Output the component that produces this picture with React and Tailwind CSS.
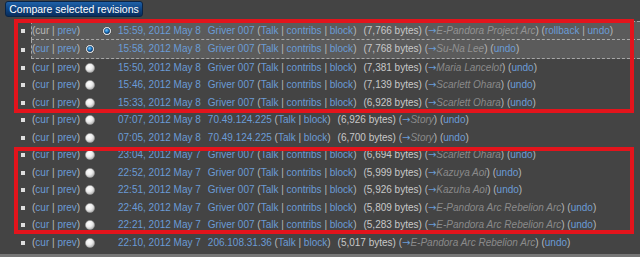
import React from "react";

const rows = [
  { hl: "first", cur: false, r1: null, r2: "on", date: "15:59, 2012 May 8", user: "Griver 007", contribs: true, bytes: "7,766", sum: "E-Pandora Project Arc", rollback: true },
  { hl: "second", cur: true, r1: "on", r2: null, date: "15:58, 2012 May 8", user: "Griver 007", contribs: true, bytes: "7,768", sum: "Su-Na Lee" },
  { cur: true, r1: "off", date: "15:50, 2012 May 8", user: "Griver 007", contribs: true, bytes: "7,381", sum: "Maria Lancelot" },
  { cur: true, r1: "off", date: "15:46, 2012 May 8", user: "Griver 007", contribs: true, bytes: "7,139", sum: "Scarlett Ohara" },
  { cur: true, r1: "off", date: "15:33, 2012 May 8", user: "Griver 007", contribs: true, bytes: "6,928", sum: "Scarlett Ohara" },
  { cur: true, r1: "off", date: "07:07, 2012 May 8", user: "70.49.124.225", contribs: false, bytes: "6,926", sum: "Story" },
  { cur: true, r1: "off", date: "07:05, 2012 May 8", user: "70.49.124.225", contribs: false, bytes: "6,700", sum: "Story" },
  { cur: true, r1: "off", date: "23:04, 2012 May 7", user: "Griver 007", contribs: true, bytes: "6,694", sum: "Scarlett Ohara" },
  { cur: true, r1: "off", date: "22:52, 2012 May 7", user: "Griver 007", contribs: true, bytes: "5,999", sum: "Kazuya Aoi" },
  { cur: true, r1: "off", date: "22:51, 2012 May 7", user: "Griver 007", contribs: true, bytes: "5,926", sum: "Kazuha Aoi" },
  { cur: true, r1: "off", date: "22:46, 2012 May 7", user: "Griver 007", contribs: true, bytes: "5,809", sum: "E-Pandora Arc Rebelion Arc" },
  { cur: true, r1: "off", date: "22:21, 2012 May 7", user: "Griver 007", contribs: true, bytes: "5,283", sum: "E-Pandora Arc Rebelion Arc" },
  { cur: true, r1: "off", date: "22:10, 2012 May 7", user: "206.108.31.36", contribs: false, bytes: "5,017", sum: "E-Pandora Arc Rebelion Arc" },
];

const L = ({ children }) => <span className="text-[#6a9bd6]">{children}</span>;
const G = ({ children }) => <span className="text-[#b8b8b8]">{children}</span>;

function Radio({ state }) {
  if (!state) return null;
  if (state === "on") {
    return (
      <svg width="10" height="10" viewBox="0 0 10 10">
        <defs>
          <radialGradient id="rb" cx="40%" cy="35%" r="60%">
            <stop offset="0%" stopColor="#7cc4f4" />
            <stop offset="60%" stopColor="#1d7fcf" />
            <stop offset="100%" stopColor="#0c3f78" />
          </radialGradient>
        </defs>
        <circle cx="5" cy="5" r="4.5" fill="#e6e6e6" stroke="#3a3a3a" strokeWidth="0.8" />
        <circle cx="5" cy="5" r="2.7" fill="url(#rb)" stroke="#0b3560" strokeWidth="0.5" />
      </svg>
    );
  }
  return (
    <svg width="10" height="10" viewBox="0 0 10 10">
      <defs>
        <radialGradient id="rw" cx="40%" cy="35%" r="65%">
          <stop offset="0%" stopColor="#ffffff" />
          <stop offset="55%" stopColor="#ececec" />
          <stop offset="100%" stopColor="#b4b4b4" />
        </radialGradient>
      </defs>
      <circle cx="5" cy="5" r="4.6" fill="url(#rw)" stroke="#9a9a9a" strokeWidth="0.5" />
    </svg>
  );
}

function Row({ r }) {
  const hlCls =
    r.hl === "first"
      ? "bg-[#5b5b5b] border-l border-t border-b border-dashed border-[#a8a8a8] h-[19px]"
      : r.hl === "second"
      ? "bg-[#5b5b5b] border-l border-b border-dashed border-[#a8a8a8] h-[19px]"
      : "border-l border-transparent h-[17.5px]";
  const sumColor = r.hl ? "text-[#929292]" : "text-[#8a8a8a]";
  return (
    <div className="flex items-center">
      <div className="w-[31px] flex justify-end pr-[6px]">
        <span className="block w-[4px] h-[4px] bg-[#dedede]" />
      </div>
      <div className={`flex-1 flex items-center whitespace-nowrap ${hlCls}`}>
        <span className="w-[53px] shrink-0">
          <G>(</G>
          {r.cur ? <L>cur</L> : <G>cur</G>}
          <G> | </G>
          <L>prev</L>
          <G>)</G>
        </span>
        <span className="w-[10px] h-[10px] flex items-center justify-center shrink-0">
          <Radio state={r.r1} />
        </span>
        <span className="w-[7px] shrink-0" />
        <span className="w-[10px] h-[10px] flex items-center justify-center shrink-0">
          <Radio state={r.r2} />
        </span>
        <span className="w-[6px] shrink-0" />
        <L>{r.date}</L>
        <span className="w-[7px] shrink-0" />
        <L>{r.user}</L>
        <span>
          <G>&nbsp;(</G>
          <L>Talk</L>
          {r.contribs && (
            <>
              <G> | </G>
              <L>contribs</L>
            </>
          )}
          <G> | </G>
          <L>block</L>
          <G>)</G>
        </span>
        <span className="w-[7px] shrink-0" />
        <span className="text-[#c8c8c8]">({r.bytes} bytes)</span>
        <span className="flex items-center">
          <G>&nbsp;(</G>
          <span
            className="text-[#6a9bd6] text-[10px]"
            style={{ fontFamily: '"DejaVu Sans", sans-serif' }}
          >
            →
          </span>
          <span className={`italic ${sumColor}`}>{r.sum}</span>
          <G>)</G>
        </span>
        <span>
          <G>&nbsp;(</G>
          {r.rollback && (
            <>
              <L>rollback</L>
              <G> | </G>
            </>
          )}
          <L>undo</L>
          <G>)</G>
        </span>
      </div>
    </div>
  );
}

export default function App() {
  return (
    <div
      className="relative w-[640px] h-[257px] overflow-hidden bg-[#444444] text-[10px] leading-none"
      style={{ fontFamily: '"Liberation Sans", Arial, sans-serif' }}
    >
      <div className="pt-[1px] pl-[5px]">
        <div className="w-[138px] h-[16px] rounded-[3px] border border-[#0a2446] bg-gradient-to-b from-[#2062a8] via-[#0f4482] to-[#082d5c] flex items-center justify-center text-white text-[10.5px]">
          Compare selected revisions
        </div>
      </div>
      <div className="mt-[4px] flex flex-col">
        {rows.map((r, i) => (
          <Row key={i} r={r} />
        ))}
      </div>
      <div className="absolute left-0 right-0 bottom-0 h-[3px] bg-[#767676]" />
      <div className="absolute left-[14px] top-[19px] w-[620px] h-[94px] border-4 border-[#e3141c] pointer-events-none" />
      <div className="absolute left-[14px] top-[147px] w-[620px] h-[87px] border-4 border-[#e3141c] pointer-events-none" />
    </div>
  );
}
